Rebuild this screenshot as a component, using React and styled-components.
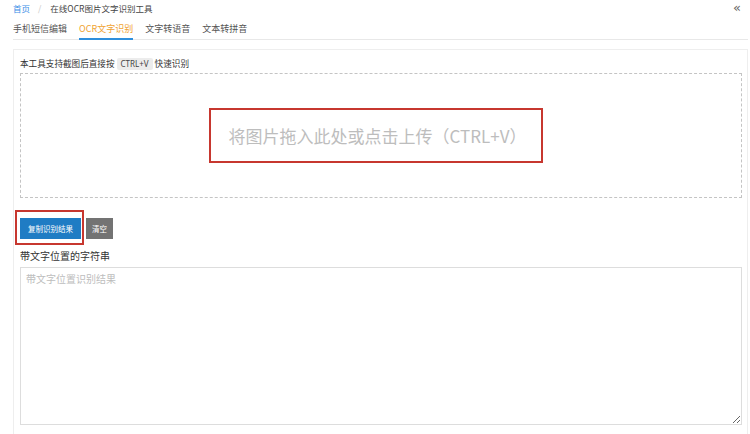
import React from 'react';
import styled, { createGlobalStyle } from 'styled-components';

const GlobalStyle = createGlobalStyle`
    html, body {
        margin: 0;
        padding: 0;
        background: #fff;
        font-family: "Noto Sans CJK SC", "Noto Sans", sans-serif;
        color: #333;
    }
`;

const Page = styled.div`
    width: 750px;
    height: 434px;
    overflow: hidden;
`;

const Header = styled.div`
    padding: 0 2px 0 13px;
`;

const Breadcrumb = styled.div`
    display: flex;
    align-items: center;
    height: 15px;
    font-size: 8.5px;
    color: #444;
`;

const Crumb = styled.span`
    color: ${props => (props.link ? '#3a8ee6' : '#444')};
`;

const Sep = styled.span`
    color: #c8c8c8;
    margin: 0 9px 0 8px;
`;

const Collapse = styled.span`
    margin-left: auto;
    margin-right: 7px;
    font-family: "DejaVu Sans", sans-serif;
    font-size: 13px;
    line-height: 13px;
    color: #666;
`;

const Tabs = styled.div`
    display: flex;
    gap: 12px;
    margin-top: 5px;
    border-bottom: 1px solid #e8e8e8;
`;

const Tab = styled.div`
    font-size: 9px;
    line-height: 17px;
    padding-bottom: 1px;
    color: ${props => (props.active ? '#f0a332' : '#555')};
    border-bottom: 2px solid ${props => (props.active ? '#2f8fdc' : 'transparent')};
    margin-bottom: -1px;
`;

const Panel = styled.div`
    margin: 9px 2px 0 13px;
    border: 1px solid #eee;
    padding: 6px 5px 20px 6px;
`;

const Hint = styled.div`
    font-size: 8.6px;
    line-height: 15px;
    color: #333;
    display: flex;
    align-items: center;
`;

const Kbd = styled.span`
    background: #ececec;
    color: #444;
    font-family: "Noto Sans", sans-serif;
    font-size: 8px;
    line-height: 12px;
    padding: 0 4px;
    margin: 0 2px;
    border-radius: 2px;
`;

const DropZone = styled.div`
    margin-top: 2px;
    height: 123px;
    border: 1px dashed #c4c4c4;
    display: flex;
    align-items: center;
    justify-content: center;
`;

const DropText = styled.span`
    border: 2px solid #c7372f;
    padding: 13px 15px 13px 18px;
    font-size: 17px;
    line-height: 25px;
    color: #bdbdbd;
    margin-right: 10px;
`;

const ButtonRow = styled.div`
    display: flex;
    gap: 5px;
    margin-top: 20px;
`;

const Marked = styled.span`
    position: relative;
    display: inline-flex;
    &::after {
        content: '';
        position: absolute;
        top: -8px;
        bottom: -6px;
        left: -5px;
        right: -3px;
        border: 2px solid #c7372f;
        pointer-events: none;
    }
`;

const Button = styled.button`
    border: 0;
    margin: 0;
    height: 21px;
    padding: 0 ${props => (props.primary ? '8px' : '6px')};
    font-family: inherit;
    font-size: 7.5px;
    color: #fff;
    background: ${props => (props.primary ? '#1f7cc4' : '#737373')};
    cursor: pointer;
`;

const FieldLabel = styled.div`
    margin-top: 9px;
    font-size: 10px;
    line-height: 15px;
    color: #333;
`;

const Result = styled.textarea`
    display: block;
    box-sizing: border-box;
    width: 100%;
    height: 158px;
    margin-top: 4px;
    border: 1px solid #ddd;
    padding: 3px 5px;
    font-family: inherit;
    font-size: 10px;
    line-height: 15px;
    color: #333;
    resize: vertical;
    outline: none;
    &::placeholder {
        color: #bdbdbd;
    }
`;

const tabs = ['手机短信编辑', 'OCR文字识别', '文字转语音', '文本转拼音'];

export default function App() {
    return (
        <Page>
            <GlobalStyle />
            <Header>
                <Breadcrumb>
                    <Crumb link>首页</Crumb>
                    <Sep>/</Sep>
                    <Crumb>在线OCR图片文字识别工具</Crumb>
                    <Collapse>«</Collapse>
                </Breadcrumb>
                <Tabs>
                    {tabs.map(t => (
                        <Tab key={t} active={t === 'OCR文字识别'}>{t}</Tab>
                    ))}
                </Tabs>
            </Header>
            <Panel>
                <Hint>
                    本工具支持截图后直接按<Kbd>CTRL+V</Kbd>快速识别
                </Hint>
                <DropZone>
                    <DropText>将图片拖入此处或点击上传（CTRL+V）</DropText>
                </DropZone>
                <ButtonRow>
                    <Marked>
                        <Button primary>复制识别结果</Button>
                    </Marked>
                    <Button>清空</Button>
                </ButtonRow>
                <FieldLabel>带文字位置的字符串</FieldLabel>
                <Result placeholder="带文字位置识别结果" />
            </Panel>
        </Page>
    );
}
